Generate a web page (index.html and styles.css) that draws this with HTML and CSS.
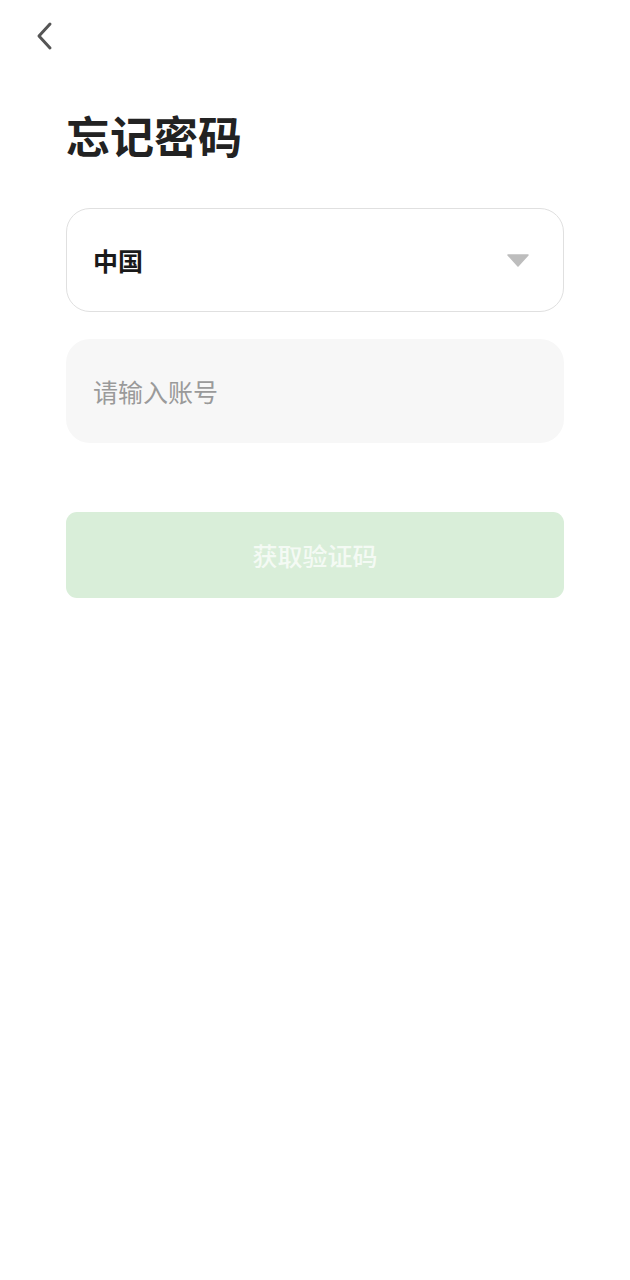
FILE: index.html
```html
<!DOCTYPE html>
<html lang="zh">
<head>
<meta charset="utf-8">
<link rel="stylesheet" href="styles.css">
</head>
<body>
<div class="page">
  <div class="topbar">
    <svg class="back" width="24" height="32" viewBox="0 0 24 32"><path d="M16 4 L5 16 L16 28" fill="none" stroke="#555" stroke-width="3" stroke-linecap="round" stroke-linejoin="round"/></svg>
  </div>
  <main class="content">
    <h1 class="title">忘记密码</h1>
    <div class="select">
      <span class="select-text">中国</span>
      <svg class="caret" width="22" height="13" viewBox="0 0 22 13"><path d="M1 1 L21 1 L11 12 Z" fill="#bdbdbd" stroke="#bdbdbd" stroke-width="1.5" stroke-linejoin="round"/></svg>
    </div>
    <div class="input"><span class="placeholder">请输入账号</span></div>
    <button class="btn">获取验证码</button>
  </main>
</div>
</body>
</html>
```
FILE: styles.css
```css
html, body {
  margin: 0;
  padding: 0;
  background: #fff;
  font-family: "Noto Sans CJK SC", "Noto Sans", sans-serif;
}
.page {
  width: 630px;
  min-height: 1280px;
}
.topbar {
  height: 72px;
  padding-left: 34px;
  display: flex;
  align-items: flex-start;
  padding-top: 20px;
  box-sizing: border-box;
}
.back { display: block; }
.content {
  padding: 0 66px;
  display: flex;
  flex-direction: column;
}
.title {
  margin: 0;
  font-size: 44px;
  line-height: 60px;
  font-weight: 700;
  color: #222;
  letter-spacing: 0;
  margin-top: 33px;
}
.select {
  margin-top: 43px;
  height: 104px;
  box-sizing: border-box;
  border: 1.5px solid #e0e0e0;
  border-radius: 24px;
  display: flex;
  align-items: center;
  justify-content: space-between;
  padding: 0 34px 0 26px;
}
.select-text {
  font-size: 25px;
  font-weight: 700;
  color: #1a1a1a;
}
.caret { display: block; }
.input {
  margin-top: 27px;
  height: 104px;
  box-sizing: border-box;
  background: #f7f7f7;
  border-radius: 24px;
  display: flex;
  align-items: center;
  padding: 0 27px;
}
.placeholder {
  font-size: 25px;
  color: #9a9a9a;
}
.btn {
  margin-top: 69px;
  height: 86px;
  border: none;
  border-radius: 11px;
  background: #d9eed9;
  color: #f4faf4;
  font-family: inherit;
  font-size: 25px;
  font-weight: 500;
  padding: 0;
}
```
